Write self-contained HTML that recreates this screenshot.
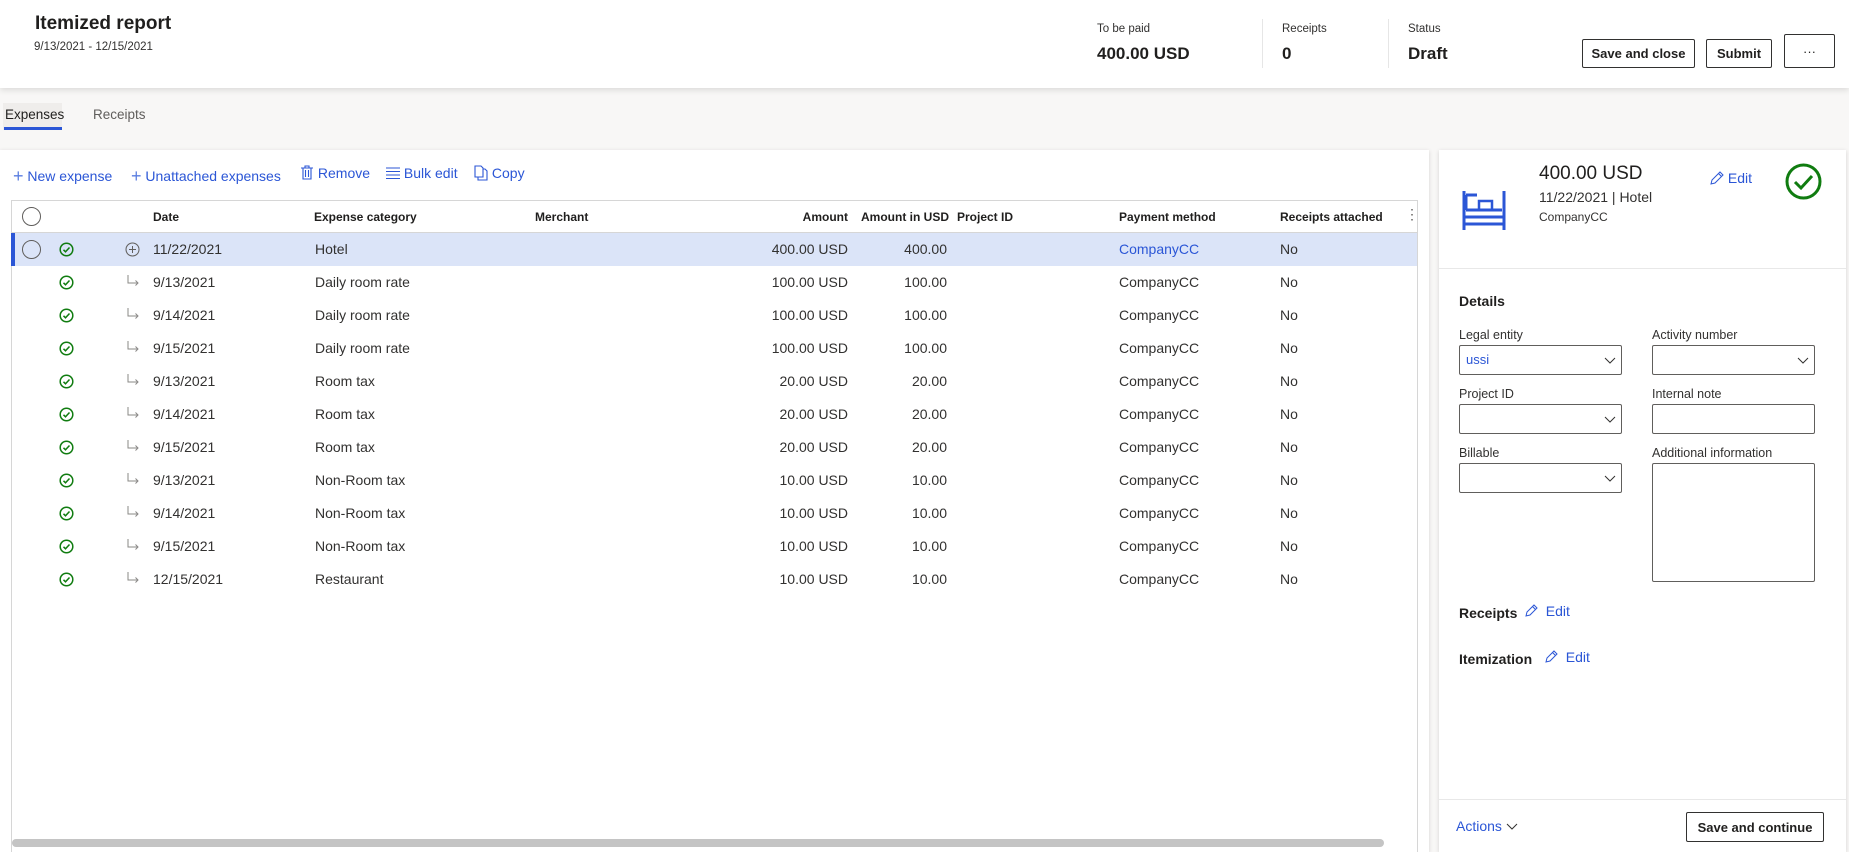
<!DOCTYPE html>
<html><head><meta charset="utf-8"><style>
*{box-sizing:border-box;margin:0;padding:0}
body{width:1849px;height:852px;overflow:hidden;background:#f8f7f6;font-family:"Liberation Sans",sans-serif;color:#323130;position:relative}
.a{position:absolute;white-space:nowrap}
.hdr{position:absolute;left:0;top:0;width:1849px;height:88px;background:#fff;box-shadow:0 2px 6px rgba(0,0,0,.12)}
.btn{position:absolute;border:1px solid #323130;background:#fff;font-size:13px;font-weight:bold;color:#201f1e;display:flex;align-items:center;justify-content:center;border-radius:2px}
.panel{position:absolute;background:#fff;box-shadow:0 1px 4px rgba(0,0,0,.15)}
.blue{color:#2b56d6}
.tb{font-size:14px;color:#2b56d6;top:165px}
.row{position:absolute;left:12px;width:1405px;height:33px;font-size:14px;color:#323130}
.row span{position:absolute;top:8px;white-space:nowrap}
.lbl{font-size:12.5px;color:#323130}
.dd{position:absolute;border:1px solid #605e5c;background:#fff;border-radius:2px}
</style></head><body>
<div class="hdr"></div>
<div class="a" style="left:35px;top:13px;font-size:19px;font-weight:bold;color:#201f1e">Itemized report</div>
<div class="a" style="left:34px;top:41px;font-size:11.5px;color:#323130">9/13/2021 - 12/15/2021</div>
<div class="a" style="left:1097px;top:23px;font-size:11.5px">To be paid</div>
<div class="a" style="left:1097px;top:44px;font-size:17px;font-weight:bold;color:#201f1e">400.00 USD</div>
<div style="position:absolute;left:1262px;top:19px;width:1px;height:49px;background:#e6e6e6"></div>
<div class="a" style="left:1282px;top:23px;font-size:11.5px">Receipts</div>
<div class="a" style="left:1282px;top:44px;font-size:17px;font-weight:bold;color:#201f1e">0</div>
<div style="position:absolute;left:1388px;top:19px;width:1px;height:49px;background:#e6e6e6"></div>
<div class="a" style="left:1408px;top:23px;font-size:11.5px">Status</div>
<div class="a" style="left:1408px;top:44px;font-size:17px;font-weight:bold;color:#201f1e">Draft</div>
<div class="btn" style="left:1582px;top:39px;width:113px;height:29px">Save and close</div>
<div class="btn" style="left:1706px;top:39px;width:66px;height:29px">Submit</div>
<div class="btn" style="left:1784px;top:34px;width:51px;height:34px;font-weight:normal">···</div>

<div style="position:absolute;left:3px;top:103px;width:59px;height:27px;background:#efedeb"></div>
<div class="a" style="left:5px;top:107px;font-size:13.5px;color:#201f1e">Expenses</div>
<div style="position:absolute;left:4px;top:127px;width:58px;height:3px;background:#2b56d6"></div>
<div class="a" style="left:93px;top:107px;font-size:13.5px;color:#605e5c">Receipts</div>

<div class="panel" style="left:0;top:150px;width:1429px;height:702px"></div>
<div class="a tb" style="left:13px"><span style="font-size:18px;position:relative;top:1px;font-weight:100;color:#5a7ee0">+</span> New expense</div>
<div class="a tb" style="left:131px"><span style="font-size:18px;position:relative;top:1px;font-weight:100;color:#5a7ee0">+</span> Unattached expenses</div>
<div class="a tb" style="left:300px"><svg width="14" height="15" style="vertical-align:-2px" fill="none" stroke="#2b56d6" stroke-width="1.1"><path d="M1 3h12M5 3V1h4v2M3 3v11h8V3M5.5 5v7M8.5 5v7"/></svg> Remove</div>
<div class="a tb" style="left:386px"><svg width="14" height="12" style="vertical-align:-1px" stroke="#2b56d6" stroke-width="1.1"><path d="M0 1h14M0 4.5h14M0 8h14M0 11.5h14"/></svg> Bulk edit</div>
<div class="a tb" style="left:474px"><svg width="14" height="16" style="vertical-align:-3px" fill="none" stroke="#2b56d6" stroke-width="1.1"><path d="M1 1h6l2 2v9H1zM4 12v3h9V6l-2-2H9"/></svg> Copy</div>

<div style="position:absolute;left:11px;top:200px;width:1407px;height:652px;border:1px solid #d6d6d6;border-bottom:none"></div>
<div style="position:absolute;left:12px;top:232px;width:1405px;height:1px;background:#d6d6d6"></div>
<div class="row" style="top:200px;font-weight:bold;font-size:12px;color:#201f1e">
<span style="left:10px;top:7px;width:19px;height:19px;border:1px solid #605e5c;border-radius:50%"></span>
<span style="left:141px;top:10px">Date</span><span style="left:302px;top:10px">Expense category</span><span style="left:523px;top:10px">Merchant</span>
<span style="right:569px;top:10px">Amount</span><span style="right:468px;top:10px">Amount in USD</span><span style="left:945px;top:10px">Project ID</span>
<span style="left:1107px;top:10px">Payment method</span><span style="left:1268px;top:10px">Receipts attached</span><span style="left:1393px;top:6px;font-weight:normal;font-size:14px;color:#605e5c">⋮</span></div>

<div style="position:absolute;left:12px;top:233px;width:1405px;height:33px;background:#dbe4f8"></div>
<div style="position:absolute;left:11px;top:233px;width:4px;height:33px;background:#2b56d6"></div>

<div id="rows"></div>
<script>
var d=[["11/22/2021","Hotel","400.00 USD","400.00",1],["9/13/2021","Daily room rate","100.00 USD","100.00"],["9/14/2021","Daily room rate","100.00 USD","100.00"],["9/15/2021","Daily room rate","100.00 USD","100.00"],["9/13/2021","Room tax","20.00 USD","20.00"],["9/14/2021","Room tax","20.00 USD","20.00"],["9/15/2021","Room tax","20.00 USD","20.00"],["9/13/2021","Non-Room tax","10.00 USD","10.00"],["9/14/2021","Non-Room tax","10.00 USD","10.00"],["9/15/2021","Non-Room tax","10.00 USD","10.00"],["12/15/2021","Restaurant","10.00 USD","10.00"]];
var h="";
d.forEach(function(r,i){
var t=233+i*33;
h+='<div class="row" style="top:'+t+'px">';
if(r[4]) h+='<span style="left:10px;top:7px;width:19px;height:19px;border:1px solid #605e5c;border-radius:50%"></span>';
h+='<span style="left:47px;top:9px"><svg width="15" height="15"><circle cx="7.5" cy="7.5" r="6.3" fill="none" stroke="#107c10" stroke-width="1.5"/><path d="M4.5 7.8l2 2 4-4.3" fill="none" stroke="#107c10" stroke-width="1.5"/></svg></span>';
if(r[4]) h+='<span style="left:113px;top:9px"><svg width="15" height="15" fill="none" stroke="#605e5c" stroke-width="1"><circle cx="7.5" cy="7.5" r="6.5"/><path d="M7.5 4v7M4 7.5h7"/></svg></span>';
else h+='<span style="left:114px;top:8px"><svg width="15" height="14" fill="none" stroke="#8a8886" stroke-width="1"><path d="M2 1v8h10M9.5 6.5l2.5 2.5-2.5 2.5"/></svg></span>';
h+='<span style="left:141px">'+r[0]+'</span><span style="left:303px">'+r[1]+'</span><span style="right:569px">'+r[2]+'</span><span style="right:470px">'+r[3]+'</span><span style="left:1107px'+(r[4]?';color:#2b56d6':'')+'">CompanyCC</span><span style="left:1268px">No</span></div>';
});
document.getElementById('rows').innerHTML=h;
</script>
<div style="position:absolute;left:12px;top:839px;width:1372px;height:8px;border-radius:4px;background:#c4c4c4"></div>

<div class="panel" style="left:1439px;top:150px;width:407px;height:702px"></div>
<svg class="a" style="left:1462px;top:191px" width="44" height="40" fill="none" stroke="#2b56d6" stroke-width="3"><path d="M2 0v39M42 0v39M4 4h11M4 19h36M2 26h40M2 33h40M4 4v15"/><rect x="17" y="10" width="13" height="9" stroke-width="2.5"/></svg>
<div class="a" style="left:1539px;top:163px;font-size:19px;color:#201f1e">400.00 USD</div>
<div class="a" style="left:1539px;top:189px;font-size:14px">11/22/2021 | Hotel</div>
<div class="a" style="left:1539px;top:210px;font-size:12px">CompanyCC</div>
<div class="a blue" style="left:1710px;top:170px;font-size:14px"><svg width="14" height="14" style="vertical-align:-2px" fill="none" stroke="#2b56d6" stroke-width="1"><path d="M1 13l1-4 8-8 3 3-8 8zM8.5 2.5l3 3"/></svg> Edit</div>
<svg class="a" style="left:1785px;top:163px" width="37" height="37"><circle cx="18.5" cy="18.5" r="16.5" fill="none" stroke="#107c10" stroke-width="3"/><path d="M10 19l6 6 11-12" fill="none" stroke="#107c10" stroke-width="3"/></svg>
<div style="position:absolute;left:1439px;top:268px;width:407px;height:1px;background:#e8e8e8"></div>

<div class="a" style="left:1459px;top:293px;font-size:14px;font-weight:bold;color:#201f1e">Details</div>
<div class="a lbl" style="left:1459px;top:328px">Legal entity</div>
<div class="a lbl" style="left:1652px;top:328px">Activity number</div>
<div class="dd" style="left:1459px;top:345px;width:163px;height:30px"><span class="a" style="left:6px;top:6px;font-size:13px;color:#2b56d6">ussi</span></div>
<div class="dd" style="left:1652px;top:345px;width:163px;height:30px"></div>
<div class="a lbl" style="left:1459px;top:387px">Project ID</div>
<div class="a lbl" style="left:1652px;top:387px">Internal note</div>
<div class="dd" style="left:1459px;top:404px;width:163px;height:30px"></div>
<div class="dd" style="left:1652px;top:404px;width:163px;height:30px"></div>
<div class="a lbl" style="left:1459px;top:446px">Billable</div>
<div class="a lbl" style="left:1652px;top:446px">Additional information</div>
<div class="dd" style="left:1459px;top:463px;width:163px;height:30px"></div>
<div class="dd" style="left:1652px;top:463px;width:163px;height:119px"></div>
<svg class="a" style="left:1604px;top:357px" width="12" height="8"><path d="M1 1l5 5 5-5" fill="none" stroke="#323130"/></svg>
<svg class="a" style="left:1797px;top:357px" width="12" height="8"><path d="M1 1l5 5 5-5" fill="none" stroke="#323130"/></svg>
<svg class="a" style="left:1604px;top:416px" width="12" height="8"><path d="M1 1l5 5 5-5" fill="none" stroke="#323130"/></svg>
<svg class="a" style="left:1604px;top:475px" width="12" height="8"><path d="M1 1l5 5 5-5" fill="none" stroke="#323130"/></svg>

<div class="a" style="left:1459px;top:605px;font-size:14px;font-weight:bold;color:#201f1e">Receipts</div>
<div class="a blue" style="left:1525px;top:603px;font-size:14px"><svg width="13" height="13" style="vertical-align:-1px" fill="none" stroke="#2b56d6" stroke-width="1"><path d="M1 12l1-4 7-7 3 3-7 7zM7.5 2.5l3 3"/></svg> &nbsp;Edit</div>
<div class="a" style="left:1459px;top:651px;font-size:14px;font-weight:bold;color:#201f1e">Itemization</div>
<div class="a blue" style="left:1545px;top:649px;font-size:14px"><svg width="13" height="13" style="vertical-align:-1px" fill="none" stroke="#2b56d6" stroke-width="1"><path d="M1 12l1-4 7-7 3 3-7 7zM7.5 2.5l3 3"/></svg> &nbsp;Edit</div>

<div style="position:absolute;left:1439px;top:799px;width:407px;height:1px;background:#e8e8e8"></div>
<div class="a blue" style="left:1456px;top:818px;font-size:14px">Actions <svg width="12" height="8"><path d="M1 1l5 5 5-5" fill="none" stroke="#323130"/></svg></div>
<div class="btn" style="left:1686px;top:812px;width:138px;height:30px">Save and continue</div>
</body></html>
